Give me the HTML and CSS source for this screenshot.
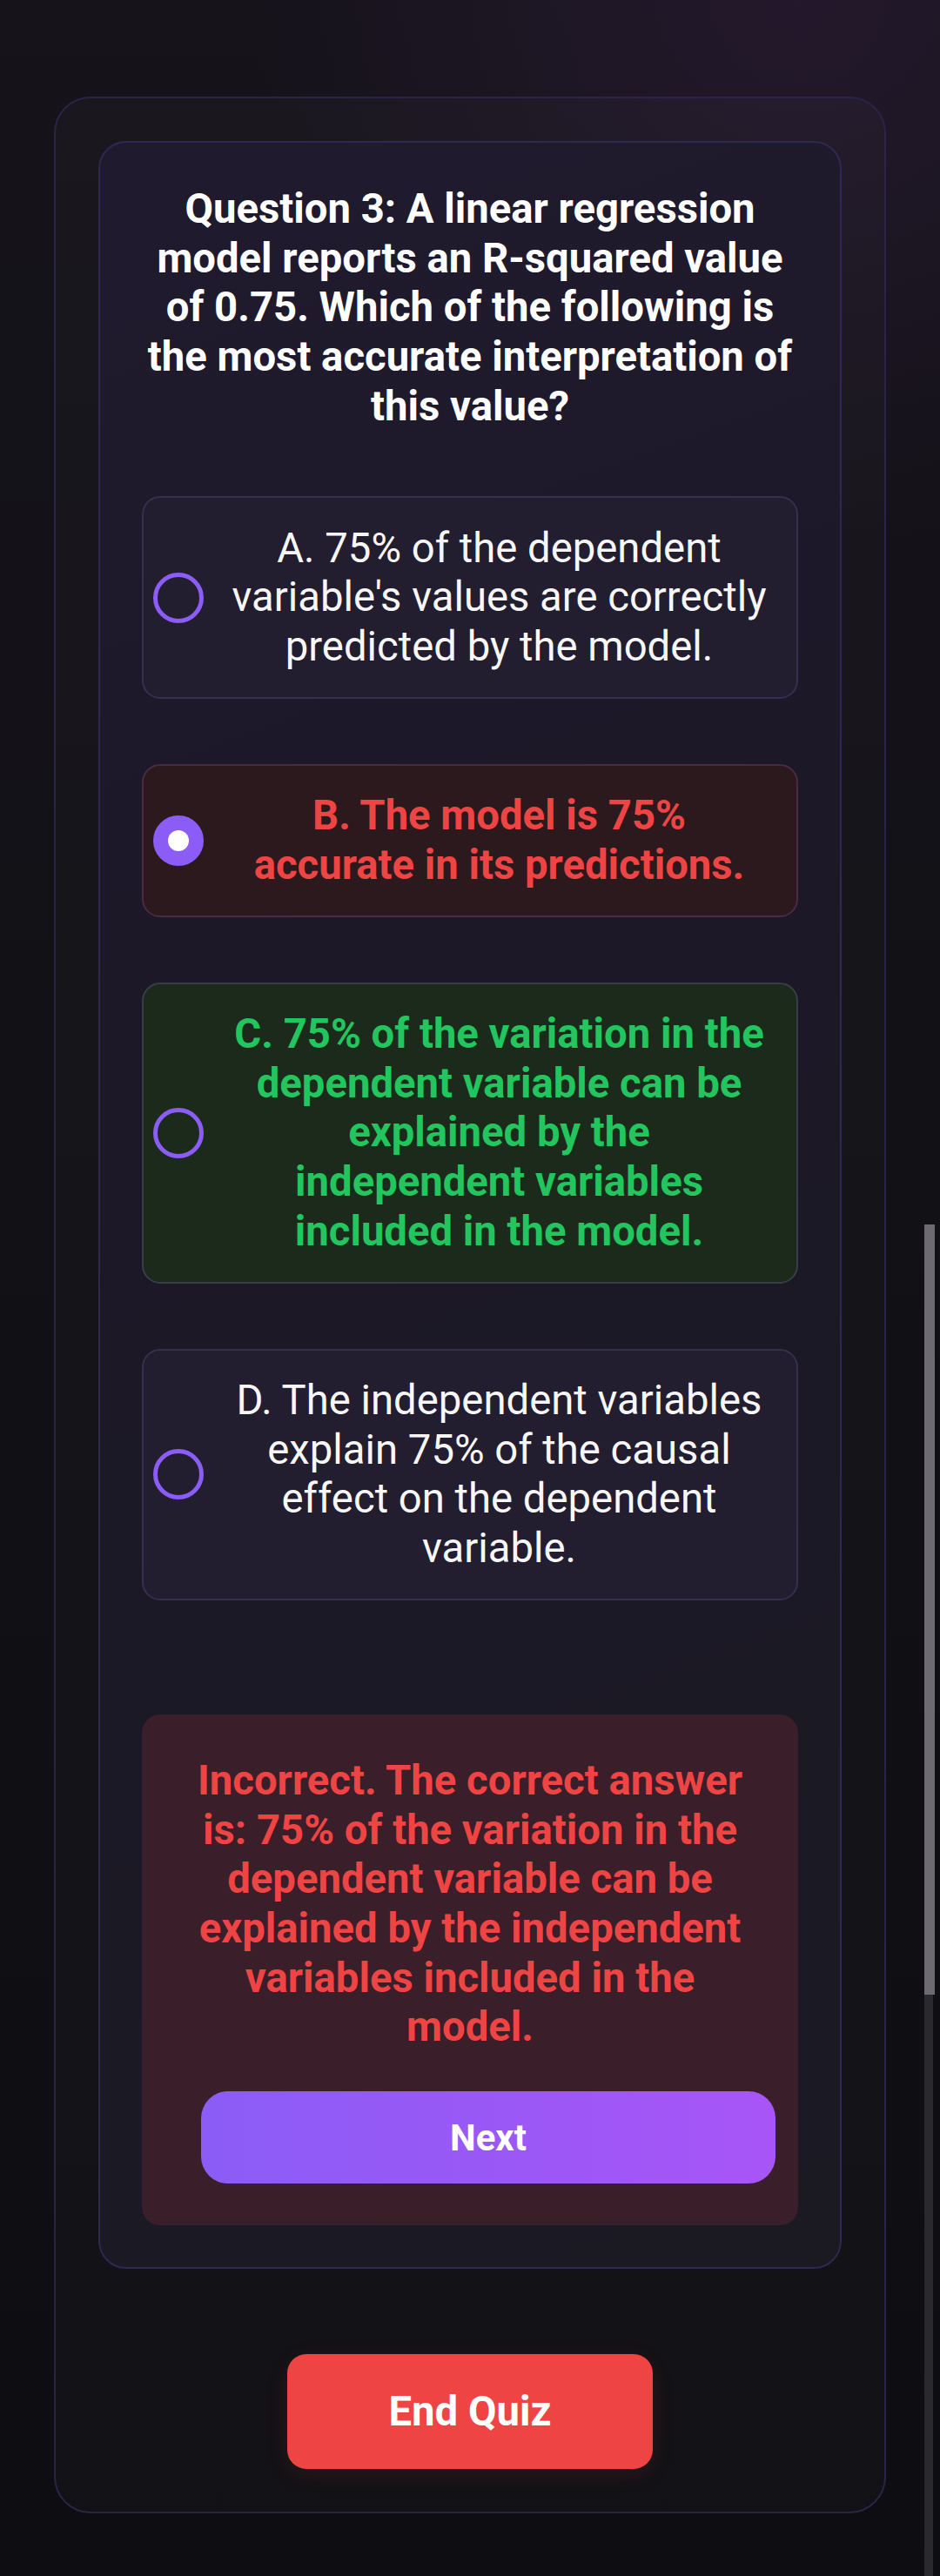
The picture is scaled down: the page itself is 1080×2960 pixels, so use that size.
FILE: index.html
```html
<!DOCTYPE html>
<html lang="en">
<head>
<meta charset="utf-8">
<title>Quiz</title>
<link rel="stylesheet" href="styles.css">
</head>
<body>
  <main class="shell">
    <section class="quiz-card">
      <h1 class="question">Question 3: A linear regression<br>model reports an R-squared value<br>of 0.75. Which of the following is<br>the most accurate interpretation of<br>this value?</h1>

      <div class="options">
        <div class="option">
          <span class="radio"></span>
          <span class="option-text">A. 75% of the dependent<br>variable's values are correctly<br>predicted by the model.</span>
        </div>
        <div class="option option-wrong">
          <span class="radio radio-checked"></span>
          <span class="option-text">B. The model is 75%<br>accurate in its predictions.</span>
        </div>
        <div class="option option-right">
          <span class="radio"></span>
          <span class="option-text">C. 75% of the variation in the<br>dependent variable can be<br>explained by the<br>independent variables<br>included in the model.</span>
        </div>
        <div class="option">
          <span class="radio"></span>
          <span class="option-text">D. The independent variables<br>explain 75% of the causal<br>effect on the dependent<br>variable.</span>
        </div>
      </div>

      <div class="feedback">
        <p class="feedback-text">Incorrect. The correct answer<br>is: 75% of the variation in the<br>dependent variable can be<br>explained by the independent<br>variables included in the<br>model.</p>
        <button class="next-btn">Next</button>
      </div>
    </section>

    <div class="end-row">
      <button class="end-btn">End Quiz</button>
    </div>
  </main>

  <div class="scroll-track"></div>
  <div class="scroll-thumb"></div>
</body>
</html>
```

FILE: styles.css
```css
* { box-sizing: border-box; }

html, body {
  margin: 0;
  padding: 0;
}

body {
  min-height: 2960px;
  font-family: Roboto, "Liberation Sans", sans-serif;
  color: #ffffff;
  background:
    radial-gradient(ellipse 900px 900px at 85% 0%, rgba(60, 35, 75, 0.35), rgba(0,0,0,0) 70%),
    linear-gradient(180deg, #16131b 0%, #121116 40%, #0e0d11 100%);
  padding-top: 111px;
  position: relative;
}

.shell {
  width: 956px;
  margin: 0 auto;
  border: 2px solid #2a2548;
  border-radius: 42px;
  padding: 49px;
  background: rgba(255, 255, 255, 0.018);
}

.quiz-card {
  border: 2px solid #2f2850;
  border-radius: 32px;
  padding: 48px;
  background: linear-gradient(160deg, #201a2e 0%, #1c1827 45%, #1b1a23 100%);
}

.question {
  margin: 0;
  font-size: 47.25px;
  line-height: 56.7px;
  font-weight: 700;
  text-align: center;
  white-space: nowrap;
  color: #ffffff;
}

.options {
  display: flex;
  flex-direction: column;
  gap: 74.5px;
  margin-top: 74.5px;
}

.option {
  display: flex;
  align-items: center;
  gap: 11px;
  padding: 29.5px 13px 29.5px 11px;
  border: 2px solid #372f4e;
  border-radius: 21px;
  background: #221d2f;
}

.radio {
  flex: 0 0 auto;
  width: 58px;
  height: 58px;
  border-radius: 50%;
  border: 5px solid #8b5cf6;
  display: flex;
  align-items: center;
  justify-content: center;
}

.radio-checked {
  background: #8b5cf6;
}

.radio-checked::after {
  content: "";
  width: 24px;
  height: 24px;
  border-radius: 50%;
  background: #ffffff;
}

.option-text {
  flex: 1 1 auto;
  text-align: center;
  font-size: 47.25px;
  line-height: 56.7px;
  white-space: nowrap;
  color: #f7f7f8;
}

.option-wrong {
  background: #2b191d;
  border-color: #472c42;
}

.option-wrong .option-text {
  color: #ef4444;
  font-weight: 700;
}

.option-right {
  background: #1b2a1b;
  border-color: #373e49;
}

.option-right .option-text {
  color: #22c55e;
  font-weight: 700;
}

.feedback {
  margin-top: 131px;
  border-radius: 21px;
  background: #3a1e2a;
  padding: 47.5px 26px 48px;
  display: flex;
  flex-direction: column;
}

.feedback-text {
  margin: 0;
  text-align: center;
  font-size: 47.25px;
  line-height: 56.7px;
  font-weight: 700;
  color: #ef4444;
  white-space: nowrap;
}

.next-btn {
  margin: 45px 0 0 42px;
  height: 106px;
  border: none;
  border-radius: 31px;
  background: linear-gradient(90deg, #8b5cf6 0%, #a855f7 100%);
  color: #ffffff;
  font-family: Roboto, "Liberation Sans", sans-serif;
  font-size: 42px;
  font-weight: 700;
}

.end-row {
  display: flex;
  justify-content: center;
  margin-top: 98px;
}

.end-btn {
  width: 420px;
  height: 132px;
  border: none;
  border-radius: 22px;
  background: #ef4444;
  color: #ffffff;
  font-family: Roboto, "Liberation Sans", sans-serif;
  font-size: 47.25px;
  font-weight: 700;
  box-shadow: 0 6px 24px rgba(239, 68, 68, 0.12);
}

.scroll-track {
  position: absolute;
  left: 1062px;
  top: 2292px;
  width: 10px;
  height: 668px;
  background: #2a292e;
}

.scroll-thumb {
  position: absolute;
  left: 1062px;
  top: 1407px;
  width: 12px;
  height: 885px;
  background: #6d6a72;
}
```
